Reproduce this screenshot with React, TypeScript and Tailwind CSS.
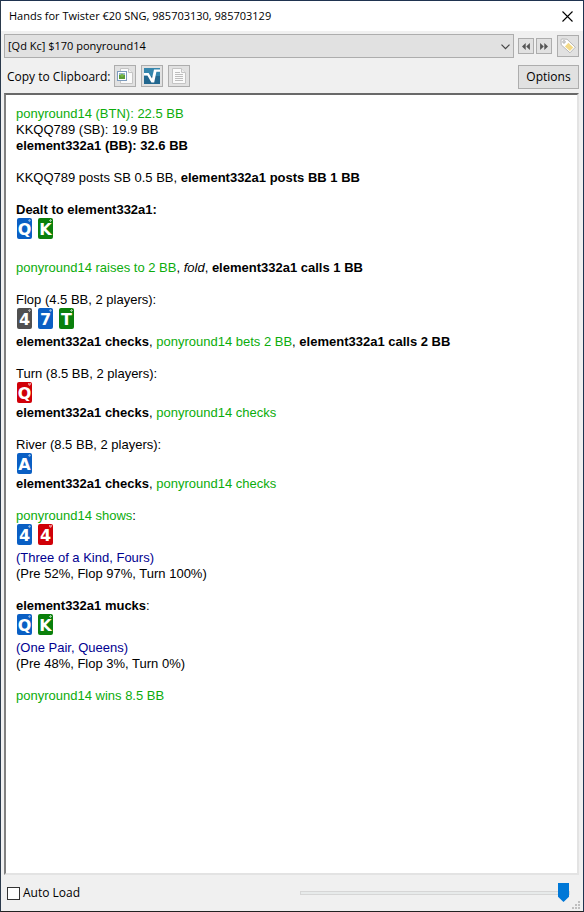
import React from "react";

const cardColors = {
  d: "bg-[#0a5fc4]",
  c: "bg-[#0a800c]",
  s: "bg-[#505050]",
  h: "bg-[#d00008]",
};

type Suit = keyof typeof cardColors;

const suitPaths = {
  d: "M1.5 0L3 1.5 1.5 3 0 1.5z",
  c: "M1 0h1v1h1v1H2v1H1V2H0V1h1z",
  s: "M1.5 0L3 1.5V2H2v1H1V2H0v-.5z",
  h: "M0 0h1l.5.5L2 0h1v1.5L1.5 3 0 1.5z",
};

function Card({ rank, suit }: { rank: string; suit: Suit }) {
  return (
    <span
      className={`relative flex h-[21px] w-[15px] items-end justify-center rounded-[2px] font-['DejaVu_Sans','Open_Sans',sans-serif] text-[16px] leading-[18px] font-bold text-white ${cardColors[suit]}`}
    >
      {rank}
      <svg
        className="absolute top-px right-px"
        width="3"
        height="3"
        viewBox="0 0 3 3"
        fill="#fff"
        fillOpacity="0.55"
      >
        <path d={suitPaths[suit]} />
      </svg>
    </span>
  );
}

function Cards({ cards }: { cards: string[] }) {
  return (
    <div className={`flex gap-1.5 pl-px ${cards.length > 1 ? "pb-[5px]" : "pb-[2px]"}`}>
      {cards.map((card) => (
        <Card key={card} rank={card[0]} suit={card[1] as Suit} />
      ))}
    </div>
  );
}

function Villain({ children }: { children: React.ReactNode }) {
  return <span className="text-[#0cac0c]">{children}</span>;
}

function ToolButton({
  label,
  className = "",
  children,
}: {
  label: string;
  className?: string;
  children: React.ReactNode;
}) {
  return (
    <button
      type="button"
      aria-label={label}
      className={`flex shrink-0 items-center justify-center border border-[#adadad] bg-[#e1e1e1] ${className}`}
    >
      {children}
    </button>
  );
}

function HandHistory() {
  return (
    <div className="flex flex-col gap-4 font-['Liberation_Sans',Arial,sans-serif] text-[13px] leading-4 text-black">
      <div>
        <p>
          <Villain>ponyround14 (BTN): 22.5 BB</Villain>
        </p>
        <p>KKQQ789 (SB): 19.9 BB</p>
        <p className="font-bold">element332a1 (BB): 32.6 BB</p>
      </div>
      <p>
        KKQQ789 posts SB 0.5 BB, <b>element332a1 posts BB 1 BB</b>
      </p>
      <div>
        <p className="font-bold">Dealt to element332a1:</p>
        <Cards cards={["Qd", "Kc"]} />
      </div>
      <p>
        <Villain>ponyround14 raises to 2 BB</Villain>, <i>fold</i>, <b>element332a1 calls 1 BB</b>
      </p>
      <div>
        <p>Flop (4.5 BB, 2 players):</p>
        <Cards cards={["4s", "7d", "Tc"]} />
        <p>
          <b>element332a1 checks</b>, <Villain>ponyround14 bets 2 BB</Villain>,{" "}
          <b>element332a1 calls 2 BB</b>
        </p>
      </div>
      <div>
        <p>Turn (8.5 BB, 2 players):</p>
        <Cards cards={["Qh"]} />
        <p>
          <b>element332a1 checks</b>, <Villain>ponyround14 checks</Villain>
        </p>
      </div>
      <div>
        <p>River (8.5 BB, 2 players):</p>
        <Cards cards={["Ad"]} />
        <p>
          <b>element332a1 checks</b>, <Villain>ponyround14 checks</Villain>
        </p>
      </div>
      <div>
        <p>
          <Villain>ponyround14 shows</Villain>:
        </p>
        <Cards cards={["4d", "4h"]} />
        <p className="text-[#000090]">(Three of a Kind, Fours)</p>
        <p>(Pre 52%, Flop 97%, Turn 100%)</p>
      </div>
      <div>
        <p>
          <b>element332a1 mucks</b>:
        </p>
        <Cards cards={["Qd", "Kc"]} />
        <p className="text-[#000090]">(One Pair, Queens)</p>
        <p>(Pre 48%, Flop 3%, Turn 0%)</p>
      </div>
      <p>
        <Villain>ponyround14 wins 8.5 BB</Villain>
      </p>
    </div>
  );
}

export default function App() {
  return (
    <div className="flex min-h-screen flex-col border border-t-[#1f3350] border-r-[#1f3350] border-b-[#222222] border-l-[#2b3a4c] bg-[#f0f0f0] font-['Open_Sans','Noto_Sans',sans-serif] text-[12px] leading-4 text-black">
      <header className="flex h-[30px] items-center justify-between bg-white pr-2.5 pl-2">
        <h1 className="text-[11px]">Hands for Twister €20 SNG, 985703130, 985703129</h1>
        <button type="button" aria-label="Close">
          <svg width="11" height="11" viewBox="0 0 11 11" fill="none" stroke="#000" strokeWidth="1.1">
            <path d="M0.5 0.5l10 10M10.5 0.5l-10 10" />
          </svg>
        </button>
      </header>

      <div className="flex items-center pt-[3px] pr-1 pl-[3px]">
        <div className="relative mr-1 min-w-0 flex-1">
          <select
            aria-label="Hand"
            className="block h-6 w-full appearance-none border border-[#adadad] bg-[#e1e1e1] pl-[3px] text-[11px]"
          >
            <option>[Qd Kc] $170 ponyround14</option>
          </select>
          <svg
            className="pointer-events-none absolute top-[10px] right-1"
            width="9"
            height="6"
            viewBox="0 0 9 6"
            fill="none"
            stroke="#444"
            strokeWidth="1.2"
          >
            <path d="M0.5 0.7l4 4 4-4" />
          </svg>
        </div>
        <ToolButton label="Previous hand" className="mr-0.5 size-4">
          <svg width="8" height="7" viewBox="0 0 8 7" fill="#555">
            <path d="M3.7 0v7L0 3.5zM7.9 0v7L4.2 3.5z" />
          </svg>
        </ToolButton>
        <ToolButton label="Next hand" className="mr-[5px] size-4">
          <svg width="8" height="7" viewBox="0 0 8 7" fill="#555">
            <path d="M0.1 0v7l3.7-3.5zM4.3 0v7L8 3.5z" />
          </svg>
        </ToolButton>
        <ToolButton label="Tag hand" className="size-[22px]">
          <svg width="16" height="16" viewBox="0 0 16 16">
            <path
              d="M1 2Q1 1 2 1L7 1.2 15.3 9.2 10 14.8 1.2 6.8z"
              fill="#fff"
              stroke="#b0b0b0"
              strokeWidth="0.9"
            />
            <path d="M8.4 4.8l4.9 4.6-3.4 3.7-5-4.7z" fill="#f3d987" />
            <circle cx="4" cy="3.9" r="1.3" fill="#e1e1e1" stroke="#aaa" strokeWidth="0.8" />
          </svg>
        </ToolButton>
      </div>

      <div className="flex items-start pt-[7px] pr-1 pb-1 pl-1.5">
        <span className="mt-1 w-[107px]">Copy to Clipboard:</span>
        <div className="flex gap-[5px]">
          <ToolButton label="Copy with images" className="size-[22px]">
            <svg width="16" height="16" viewBox="0 0 16 16">
              <path d="M3.5 0.5h8l4 4v11h-12z" fill="#fafafa" stroke="#c4c4c4" />
              <path d="M11.5 0.5v4h4" fill="#eee" stroke="#c4c4c4" />
              <rect x="0.5" y="3.5" width="9" height="9" fill="#fff" stroke="#7d9bbd" />
              <rect x="2" y="5" width="6" height="6" fill="#5d9c37" />
              <path d="M2 5h6v2H2z" fill="#95b5c8" />
              <circle cx="5" cy="7.3" r="1.6" fill="#76b847" />
            </svg>
          </ToolButton>
          <ToolButton label="Copy for forum" className="size-[22px]">
            <svg width="16" height="16" viewBox="0 0 16 16">
              <path d="M0 0h16v16H0z" fill="#3586ad" />
              <path d="M0 8h16v8H0z" fill="#22678f" />
              <path d="M0 5h4.6L8 10.6 10 1.5H16v2.3h-3.6L10.2 14.5H7.4L3.4 7.6H0z" fill="#fff" />
            </svg>
          </ToolButton>
          <ToolButton label="Copy as text" className="size-[22px]">
            <svg width="14" height="16" viewBox="0 0 14 16">
              <path d="M0.5 0.5h9l4 4v11h-13z" fill="#fafafa" stroke="#c4c4c4" />
              <path d="M9.5 0.5v4h4" fill="#eee" stroke="#c4c4c4" />
              <path d="M3 4.5h5M3 6.5h8M3 8.5h8M3 10.5h8M3 12.5h8" stroke="#bdbdbd" />
            </svg>
          </ToolButton>
        </div>
        <button
          type="button"
          className="ml-auto h-6 w-[61px] border border-[#adadad] bg-[#e1e1e1]"
        >
          Options
        </button>
      </div>

      <main className="mr-1 ml-[3px] flex-1 border-2 border-t-[#696969] border-r-[#e3e3e3] border-b-[#e3e3e3] border-l-[#808080] bg-white px-2.5 py-[11px]">
        <HandHistory />
      </main>

      <footer className="relative flex h-9 items-center justify-between pr-[13px] pl-1.5">
        <label className="flex items-center gap-[3px]">
          <input
            type="checkbox"
            className="size-[13px] appearance-none border border-[#333] bg-white checked:bg-[#0078d7]"
          />
          Auto Load
        </label>
        <input
          type="range"
          aria-label="Hand position"
          min={0}
          max={100}
          defaultValue={100}
          className="h-[19px] w-[48%] appearance-none bg-transparent [&::-webkit-slider-runnable-track]:h-1 [&::-webkit-slider-runnable-track]:border [&::-webkit-slider-runnable-track]:border-[#d6d6d6] [&::-webkit-slider-runnable-track]:bg-[#e7eaea] [&::-webkit-slider-thumb]:-mt-[9px] [&::-webkit-slider-thumb]:h-[19px] [&::-webkit-slider-thumb]:w-[11px] [&::-webkit-slider-thumb]:appearance-none [&::-webkit-slider-thumb]:bg-[#0078d7] [&::-webkit-slider-thumb]:[clip-path:polygon(0_0,100%_0,100%_72%,50%_100%,0_72%)]"
        />
        <svg
          className="absolute right-[3px] bottom-0.5"
          width="8"
          height="8"
          viewBox="0 0 8 8"
          fill="#bfbfbf"
        >
          <path d="M6 0h2v2H6zM3 3h2v2H3zM6 3h2v2H6zM0 6h2v2H0zM3 6h2v2H3zM6 6h2v2H6z" />
        </svg>
      </footer>
    </div>
  );
}
